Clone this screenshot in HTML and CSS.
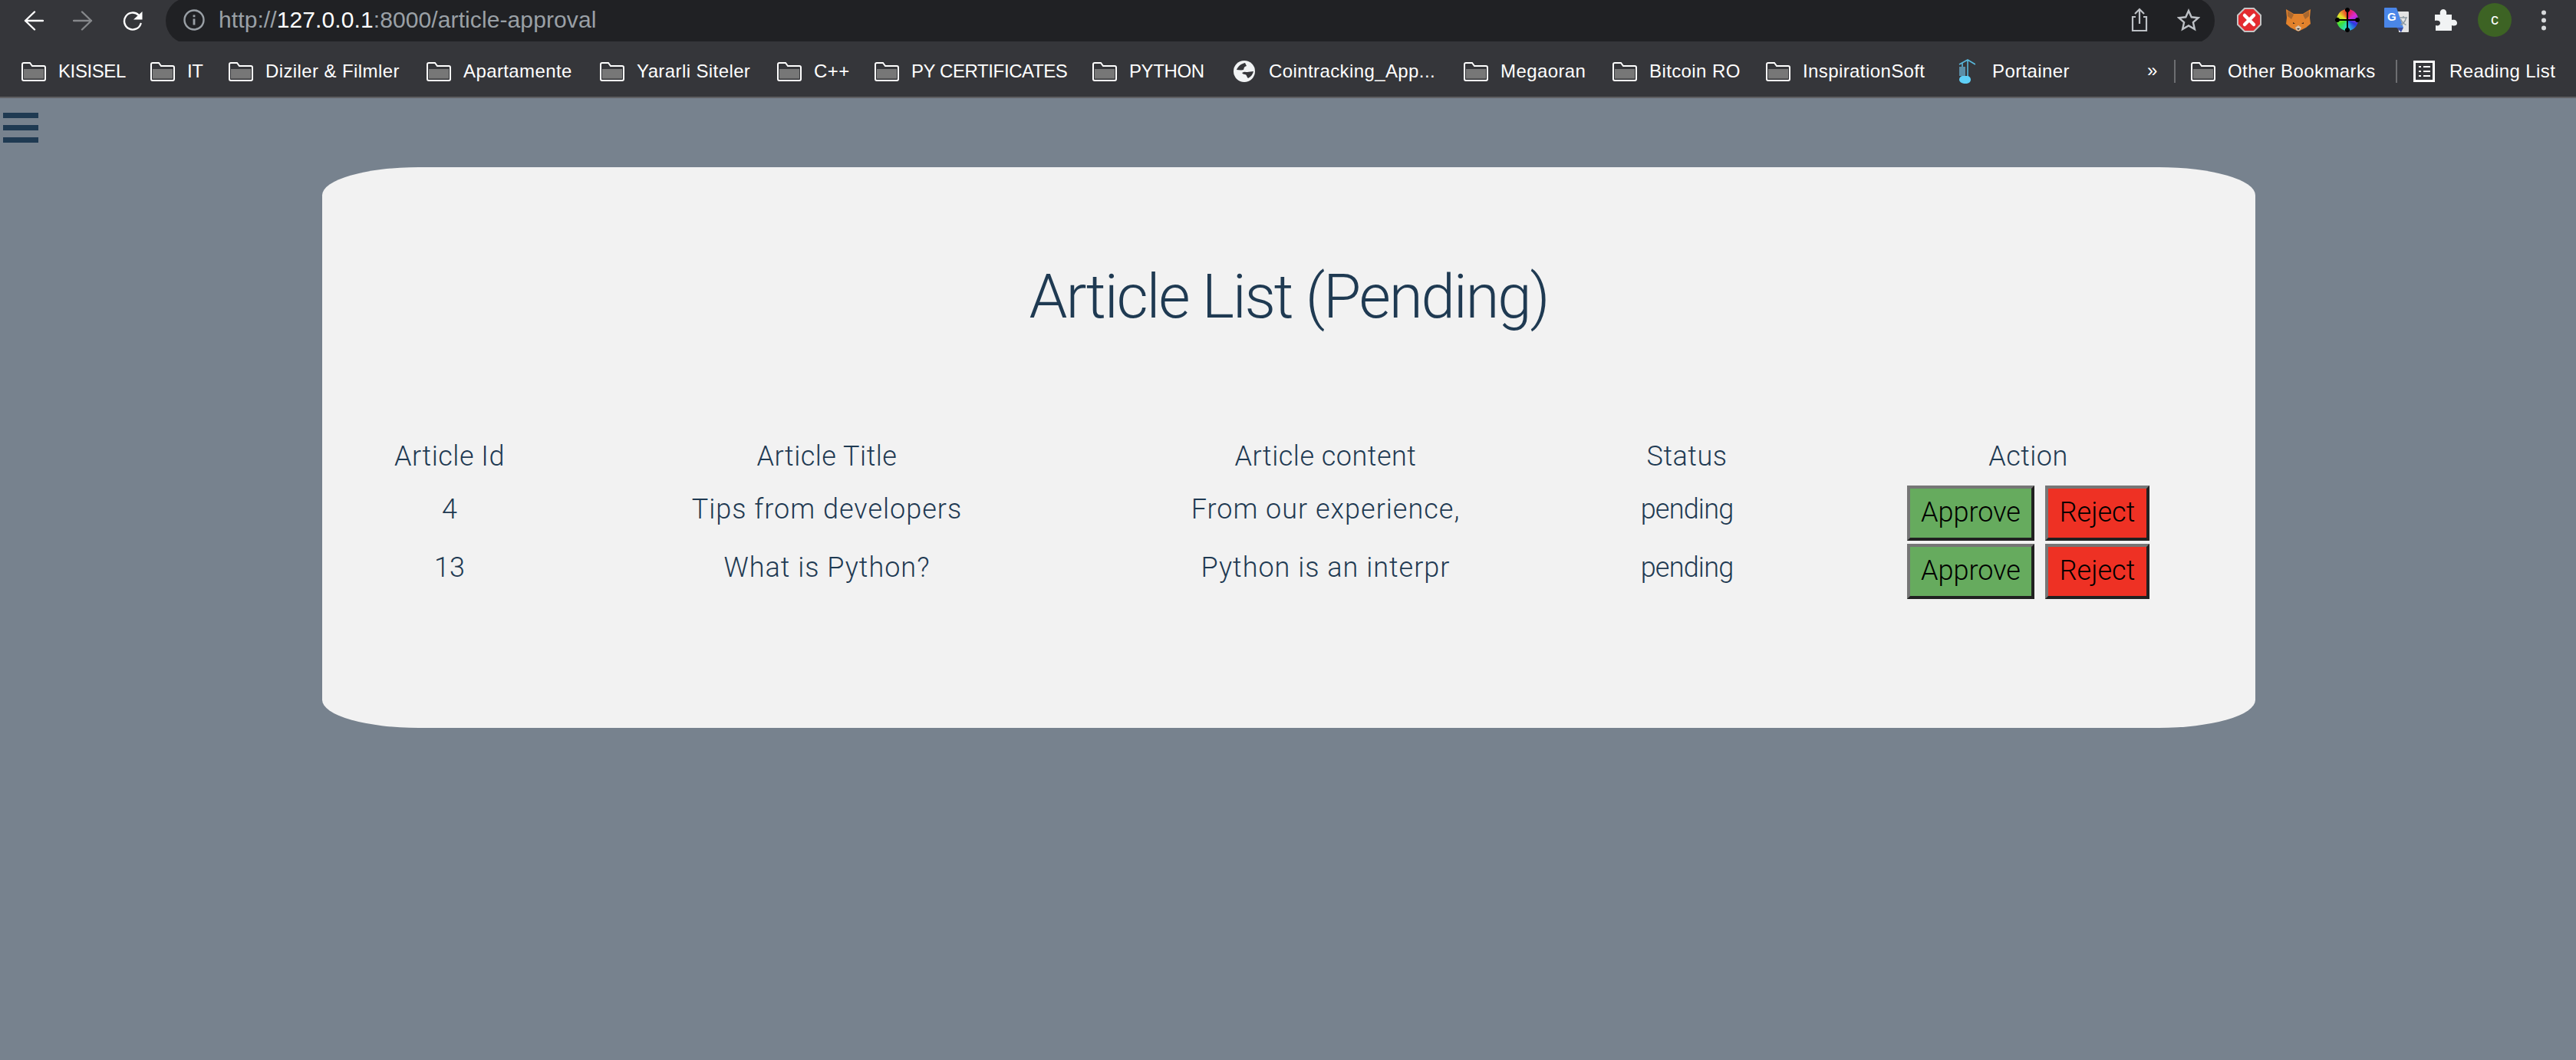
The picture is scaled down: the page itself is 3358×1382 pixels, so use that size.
FILE: index.html
```html
<!DOCTYPE html>
<html lang="en">
<head>
<meta charset="utf-8">
<title>Article approval</title>
<link rel="stylesheet" href="styles.css">
</head>
<body>
<svg class="defs" width="0" height="0" aria-hidden="true">
  <symbol id="folder" viewBox="0 0 32 25">
    <path d="M3 9h26v12H3z" fill="#777"/>
    <path d="M3 21h26v1H3z" fill="#555"/>
    <path d="M3 1h8l3 4h15a2 2 0 0 1 2 2v15a2 2 0 0 1-2 2H3a2 2 0 0 1-2-2V3a2 2 0 0 1 2-2z" fill="none" stroke="#fff" stroke-width="2"/>
  </symbol>
</svg>
<header class="toolbar">
  <svg class="nav nav-back" viewBox="0 0 26 26"><path d="M25 13H2M14 1.500 2 13l12 11.500" fill="none" stroke="#fff" stroke-width="2.400" stroke-linecap="round" stroke-linejoin="round"/></svg>
  <svg class="nav nav-fwd" viewBox="0 0 26 26"><path d="M1 13h23M12 1.500 24 13 12 24.500" fill="none" stroke="#86888b" stroke-width="2.400" stroke-linecap="round" stroke-linejoin="round"/></svg>
  <svg class="nav nav-reload" viewBox="0 0 26 26"><path d="M20.500 5.500A11 11 0 1 0 23.500 17" fill="none" stroke="#fff" stroke-width="2.400" stroke-linecap="round"/><path d="M25.500 1v10.500H14z" fill="#fff"/></svg>
  <div class="omnibox">
    <svg class="info" viewBox="0 0 28 28"><circle cx="14" cy="14" r="12.500" fill="none" stroke="#9aa0a6" stroke-width="2.400"/><path d="M14 12.500v8M14 7.500v2.800" stroke="#9aa0a6" stroke-width="2.800"/></svg>
    <div class="url">http://<b>127.0.0.1</b>:8000/article-approval</div>
    <svg class="omni-icon share" viewBox="0 0 26 32"><path d="M13 21V3M7 8l6-6 6 6M8 12H4v18h18V12h-4" fill="none" stroke="#bdc1c6" stroke-width="2.200"/></svg>
    <svg class="omni-icon star" viewBox="0 0 30 30"><path d="m15 3 3.700 8.300 9 .9-6.800 6 2 8.800-7.900-4.600L7.100 27l2-8.800-6.800-6 9-.9z" fill="none" stroke="#bdc1c6" stroke-width="2.400"/></svg>
  </div>
  <div class="extensions">
    <span class="ext"><svg viewBox="0 0 32 32" width="32" height="32"><path d="M10 1h12l9 9v12l-9 9H10l-9-9V10z" fill="#e32a2f" stroke="#c4c4c4" stroke-width="2"/><path d="m10 10 12 12m0-12L10 22" stroke="#fff" stroke-width="4.500" stroke-linecap="round"/></svg></span>
    <span class="ext"><svg viewBox="0 0 32 30" width="32" height="30"><path d="M0 1 10 7h12L32 1l-1 11 1 8-6 5-6 3-4 2-4-2-6-3-6-5 1-8z" fill="#e2822c"/><path d="M2 3 10 8l-3 6-5-4zM30 3 22 8l3 6 5-4z" fill="#a8672f"/><path d="m12 25 4-3 4 3-2 4h-4z" fill="#d6c3ae"/><path d="M14 26h4l-2 2z" fill="#2c2c2c"/><path d="M9 18l3 2-3 0zM23 18l-3 2 3 0z" fill="#3a2a1e"/></svg></span>
    <span class="ext wheel-slot"><span class="wheel"></span></span>
    <span class="ext"><svg viewBox="0 0 32 32" width="32" height="32"><path d="M17 5h14a1 1 0 0 1 1 1v25a1 1 0 0 1-1 1H19z" fill="#e3e3e3"/><path d="M1 0h15l9 26H1a1 1 0 0 1-1-1V1a1 1 0 0 1 1-1z" fill="#4a86e8"/><path d="M16 26h9l-3 6z" fill="#3b4fa3"/><text class="ext-g" x="4" y="17">G</text><path d="M20 13h10M25 11v2M28.500 13c-1 5-4 8-7 9.500M21.500 15c1 3 4 6 7 7.500" fill="none" stroke="#8e9aa3" stroke-width="1.500"/></svg></span>
    <span class="ext"><svg viewBox="0 0 29 28" width="29" height="28"><path d="M0 7h7C6 3 8 0 11 0s5 3 4 7h7v7c3-1 7 0 7 4s-4 4-7 3v7H1v-7c3 1 6 0 6-3s-3-4-7-3z" fill="#f1f3f4"/></svg></span>
    <span class="avatar">c</span>
    <span class="ext"><svg viewBox="0 0 8 27" width="8" height="27"><circle cx="4" cy="3.500" r="3" fill="#d7d9db"/><circle cx="4" cy="13.500" r="3" fill="#d7d9db"/><circle cx="4" cy="23.500" r="3" fill="#d7d9db"/></svg></span>
  </div>
</header>
<nav class="bookmarks">
  <a class="bm caps"><svg class="folder"><use href="#folder"/></svg><span>KISISEL</span></a>
  <a class="bm caps"><svg class="folder"><use href="#folder"/></svg><span>IT</span></a>
  <a class="bm"><svg class="folder"><use href="#folder"/></svg><span>Diziler &amp; Filmler</span></a>
  <a class="bm"><svg class="folder"><use href="#folder"/></svg><span>Apartamente</span></a>
  <a class="bm"><svg class="folder"><use href="#folder"/></svg><span>Yararli Siteler</span></a>
  <a class="bm"><svg class="folder"><use href="#folder"/></svg><span>C++</span></a>
  <a class="bm caps"><svg class="folder"><use href="#folder"/></svg><span>PY CERTIFICATES</span></a>
  <a class="bm caps"><svg class="folder"><use href="#folder"/></svg><span>PYTHON</span></a>
  <a class="bm bm-globe"><svg class="globe" viewBox="0 0 28 28"><circle cx="14" cy="14" r="14" fill="#f1f3f4"/><path d="M15 3C10 4 6 7 4 12c3 0 6 1 9 0 1-2 0-4 4-5z" fill="#35363a"/><path d="M11 16c3-2 5-1 7-1s5-1 8-1c-1 4-3 7-7 9-2-2-2-5-4-5s-3-1-4-2z" fill="#35363a"/></svg><span>Cointracking_App...</span></a>
  <a class="bm"><svg class="folder"><use href="#folder"/></svg><span>Megaoran</span></a>
  <a class="bm"><svg class="folder"><use href="#folder"/></svg><span>Bitcoin RO</span></a>
  <a class="bm"><svg class="folder"><use href="#folder"/></svg><span>InspirationSoft</span></a>
  <a class="bm bm-portainer"><svg class="portainer" viewBox="0 0 22 32"><path d="M1 7 12 1l10 6M12 1v22M5 5v5" fill="none" stroke="#58b8dc" stroke-width="1.600"/><path d="M1 10h8v12H1z" fill="#5b8fa8"/><path d="M1 27c0-3 2-5 5-5h5c3 0 5 2 5 5s-3 5-7 5-8-2-8-5z" fill="#5fd0f7"/></svg><span>Portainer</span></a>
  <span class="more">»</span>
  <span class="sep"></span>
  <a class="bm"><svg class="folder"><use href="#folder"/></svg><span>Other Bookmarks</span></a>
  <span class="sep"></span>
  <a class="bm bm-reading"><svg class="list" viewBox="0 0 28 28"><path d="M1.500 1.500h25v25h-25z" fill="none" stroke="#fff" stroke-width="3"/><path d="M7 8h3M13 8h9M7 14h3M13 14h9M7 20h3M13 20h9" stroke="#fff" stroke-width="2"/></svg><span>Reading List</span></a>
</nav>
<button class="hamburger" aria-label="Menu"><i></i><i></i><i></i></button>
<main class="card">
  <h1 class="title">Article List (Pending)</h1>
  <table class="articles">
    <colgroup><col class="c1"><col class="c2"><col class="c3"><col class="c4"><col class="c5"></colgroup>
    <thead>
      <tr><th>Article Id</th><th>Article Title</th><th>Article content</th><th>Status</th><th>Action</th></tr>
    </thead>
    <tbody>
      <tr><td>4</td><td class="wide">Tips from developers</td><td class="wide">From our experience,</td><td class="tight">pending</td><td><div class="actions"><button class="btn approve">Approve</button><button class="btn reject">Reject</button></div></td></tr>
      <tr><td>13</td><td class="wide">What is Python?</td><td class="wide">Python is an interpr</td><td class="tight">pending</td><td><div class="actions"><button class="btn approve">Approve</button><button class="btn reject">Reject</button></div></td></tr>
    </tbody>
  </table>
</main>
</body>
</html>
```
FILE: styles.css
```css
* { box-sizing: border-box; }
html, body { margin: 0; height: 100%; }
body { background: #77828e; overflow: hidden; font-family: "Liberation Sans", Arial, sans-serif; }
.defs { position: absolute; }

.toolbar { height: 54px; background: #35363a; display: flex; align-items: center; padding-left: 31px; overflow: hidden; }
.nav { width: 26px; height: 26px; flex: none; }
.nav-fwd { margin-left: 38px; }
.nav-reload { margin-left: 39px; }
.omnibox { flex: none; width: 2671px; margin-left: 30px; height: 60px; border-radius: 30px; background: #202124; display: flex; align-items: center; padding-left: 23px; }
.info { width: 28px; height: 28px; flex: none; margin-top: -2px; }
.url { margin-left: 18px; font-size: 30px; letter-spacing: .1px; color: #9aa0a6; white-space: nowrap; margin-top: -2px; }
.url b { font-weight: 400; color: #fff; }
.omni-icon { flex: none; margin-top: -2px; }
.share { width: 26px; height: 32px; margin-left: auto; }
.star { width: 30px; height: 30px; margin-left: 36px; margin-right: 19px; }
.extensions { display: flex; align-items: center; margin-left: 13px; }
.ext { width: 64px; height: 54px; padding-bottom: 2px; display: flex; align-items: center; justify-content: center; }
.ext-g { font-size: 15px; font-weight: 700; fill: #fff; font-family: "Liberation Sans", sans-serif; }
.wheel-slot { position: relative; }
.wheel { width: 28px; height: 28px; border-radius: 50%; background: conic-gradient(#e8202a, #d82ad8 60deg, #2a3ae0 120deg, #2ad8e0 180deg, #3ae03a 240deg, #e8e02a 300deg, #e8202a); }
.wheel::before, .wheel::after { content: ""; position: absolute; }
.wheel::before { left: 29px; top: 10px; width: 6px; height: 32px; background: radial-gradient(circle 3px at 3px 3px, #000 95%, transparent), radial-gradient(circle 3px at 3px 29px, #000 95%, transparent), linear-gradient(#000, #000) center / 2px 100% no-repeat; }
.wheel::after { left: 16px; top: 23px; width: 32px; height: 6px; background: radial-gradient(circle 3px at 3px 3px, #000 95%, transparent), radial-gradient(circle 3px at 29px 3px, #000 95%, transparent), linear-gradient(#000, #000) center / 100% 2px no-repeat; }
.avatar { width: 44px; height: 44px; margin: 0 10px 2px; border-radius: 50%; background: #3d6324; color: #fff; font-size: 20px; line-height: 42px; text-align: center; }

.bookmarks { height: 74px; background: #35363a; border-bottom: 2px solid #5f6063; padding: 6px 0 0 28px; color: #fff; font-size: 24px; white-space: nowrap; display: grid; align-items: center; grid-template-columns: 168px 102px 258px 226px 231px 127px 284px 184px 300px 194px 200px 248px 249px 35px 22px 267px 23px 1fr; }
.bm { display: flex; align-items: center; gap: 16px; letter-spacing: .4px; }
.caps { letter-spacing: -.4px; }
.folder { width: 32px; height: 25px; flex: none; }
.globe { width: 28px; height: 28px; flex: none; }
.bm-globe { gap: 18px; }
.portainer { width: 22px; height: 32px; flex: none; margin-left: 3px; }
.bm-portainer { gap: 22px; }
.more { font-size: 24px; margin-top: -3px; }
.sep { width: 2px; height: 30px; background: #6d6e71; }
.bm-reading { gap: 19px; }
.list { width: 28px; height: 28px; flex: none; }

.hamburger { display: block; width: 46px; padding: 0; margin: 19px 0 0 4px; border: 0; background: none; }
.hamburger i { display: block; height: 7px; margin-bottom: 9px; background: #1f3a52; }

.card { width: 2520px; height: 731px; margin: 23px 0 0 420px; background: #f2f2f2; border-radius: 5%; padding-top: 113px; color: #1f3a52; font-family: Roboto, sans-serif; font-weight: 300; }
.title { margin: 0; font-size: 80px; line-height: 112px; font-weight: 300; text-align: center; letter-spacing: -2.200px; }
.articles { table-layout: fixed; width: 2434px; margin: 112px 0 0 44px; border-collapse: collapse; font-size: 36px; }
.c1 { width: 244px; }
.c2 { width: 740px; }
.c3 { width: 560px; }
.c4 { width: 382px; }
.c5 { width: 508px; }
.articles th { font-weight: 300; height: 76px; padding: 4px 0 0; text-align: center; letter-spacing: .5px; }
.articles td { height: 76px; padding: 0 0 10px; text-align: center; }
.articles td:last-child { padding: 0; }
.articles .wide { letter-spacing: 1px; }
.articles .tight { letter-spacing: -.8px; }
.actions { display: flex; justify-content: center; gap: 14px; }
.btn { height: 72px; padding: 0 0 3px; border: 4px solid; border-color: #767676 #212121 #212121 #767676; color: #000; font: 300 36px Roboto, sans-serif; }
.approve { width: 166px; background: #66ab5e; }
.reject { width: 136px; background: #ee3124; }
```
